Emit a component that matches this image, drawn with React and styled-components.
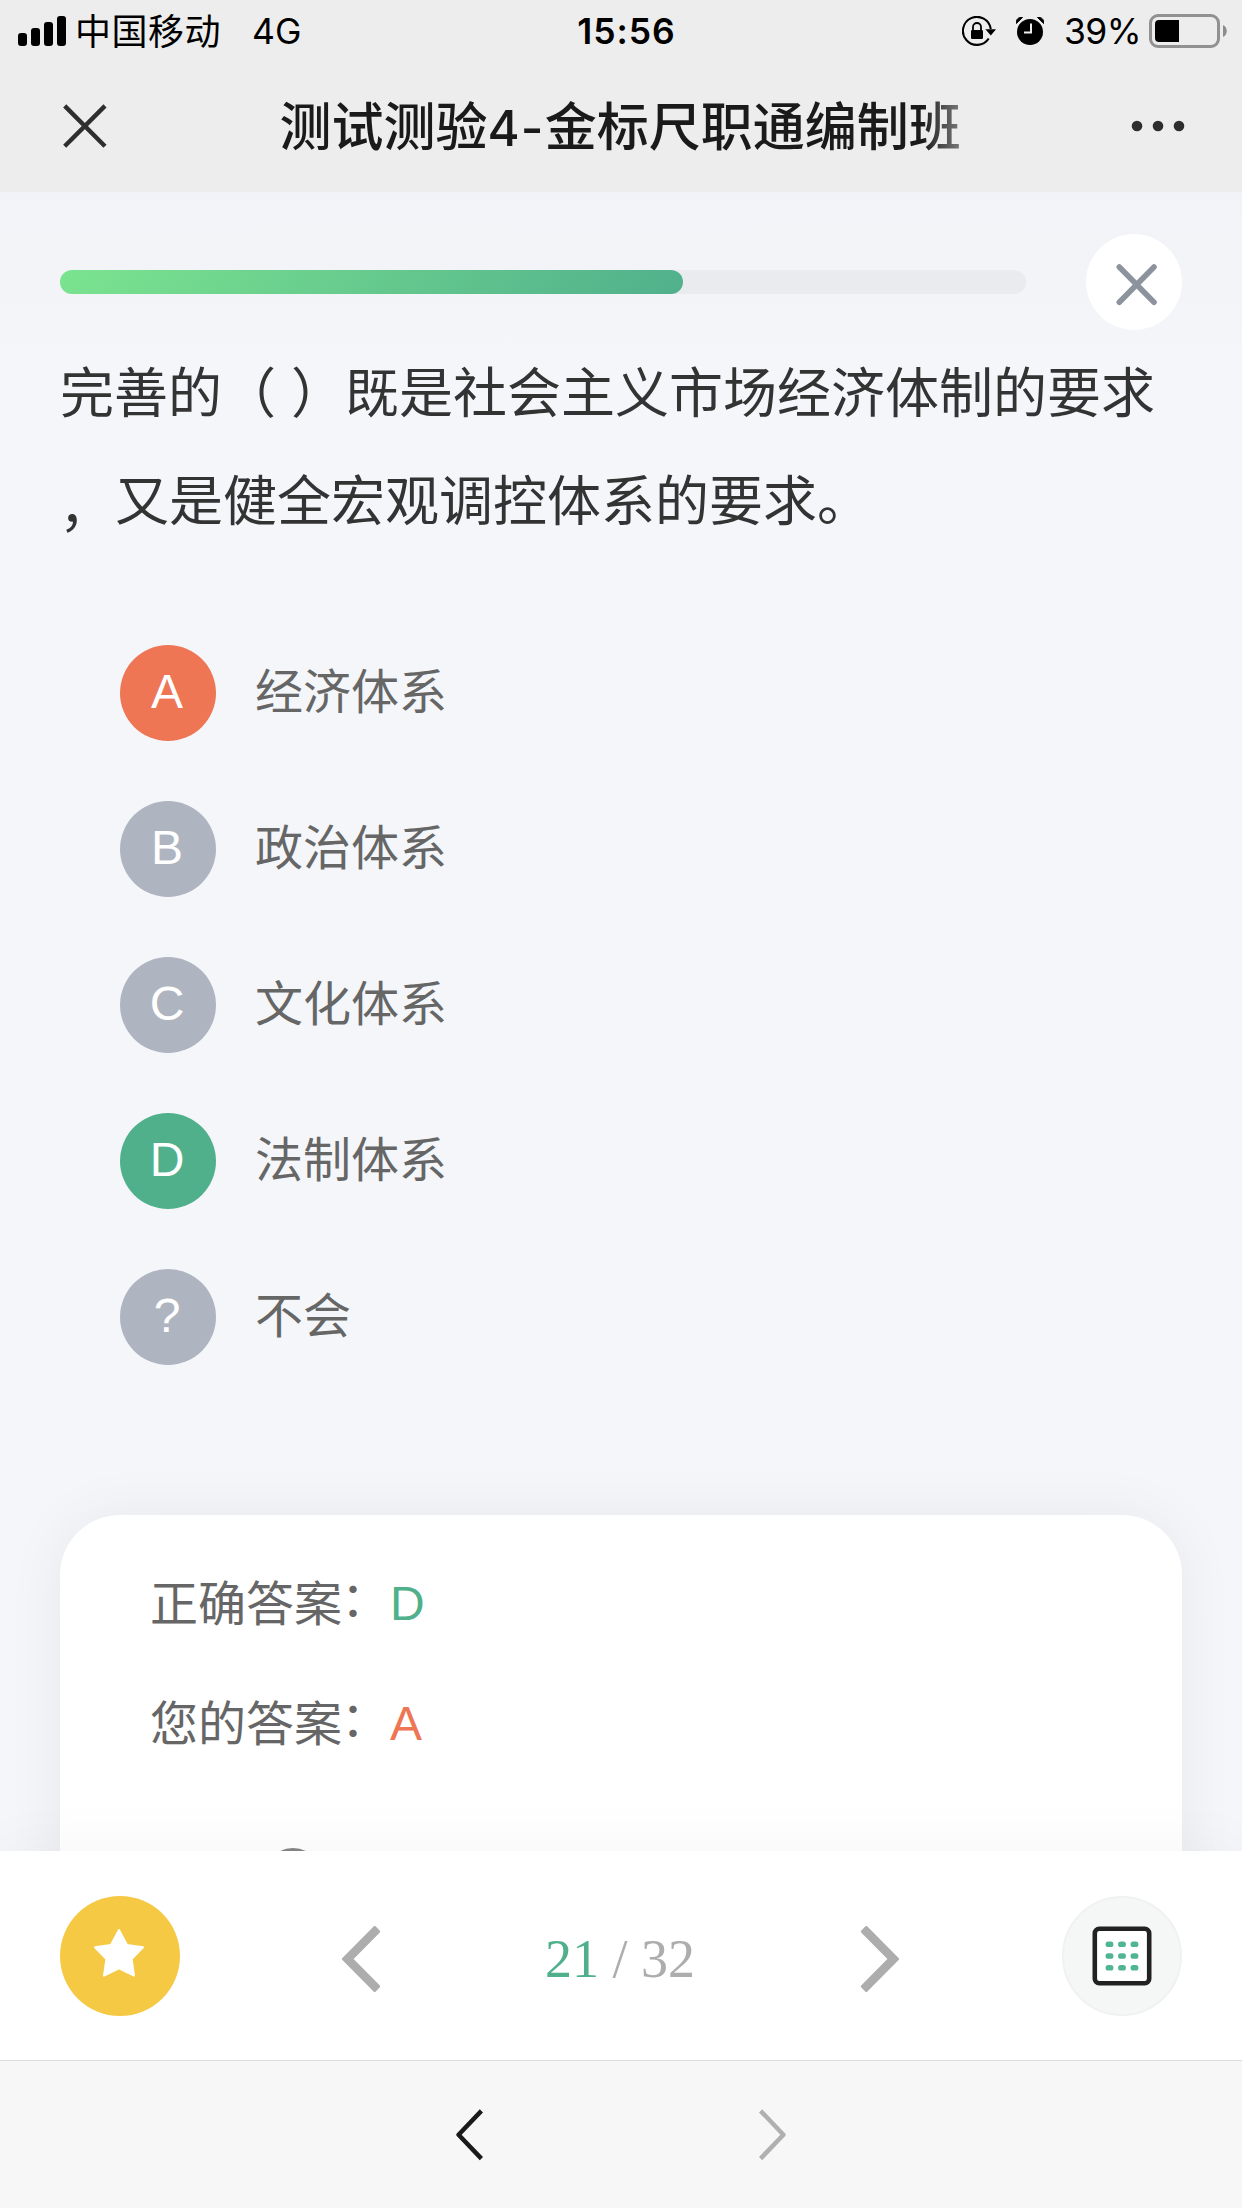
import React from "react";
import styled, { createGlobalStyle } from "styled-components";

const CJK = `"Noto Sans CJK SC", sans-serif`;
const LATIN = `"Liberation Sans", "Noto Sans CJK SC", sans-serif`;

const GlobalStyle = createGlobalStyle`
  * { box-sizing: border-box; }
  body { margin: 0; background: #f4f6fa; }
  p { margin: 0; }
  button { border: 0; padding: 0; background: none; font: inherit; color: inherit; display: block; }
  svg { display: block; flex: none; }
`;

const Screen = styled.div`
  width: 1242px;
  height: 2208px;
  display: flex;
  flex-direction: column;
  overflow: hidden;
  font-family: ${CJK};
`;

const Top = styled.header`
  height: 192px;
  flex: none;
  background: #ededed;
`;

const StatusBar = styled.div`
  height: 60px;
  display: grid;
  grid-template-columns: 1fr auto 1fr;
  align-items: center;
  padding: 0 15px 0 18px;
  color: #000;
`;

const StatusGroup = styled.div`
  display: flex;
  align-items: center;
  justify-content: ${(p) => (p.$end ? "flex-end" : "flex-start")};
`;

const Carrier = styled.span`
  font-size: 36px;
  line-height: 60px;
  height: 60px;
  letter-spacing: 0.5px;
  margin: -5px 0 0 9px;
`;

const StatusText = styled.span`
  font-family: Inter, sans-serif;
  font-size: 35.5px;
  line-height: 60px;
  font-weight: ${(p) => p.$weight || 400};
  letter-spacing: ${(p) => p.$spacing || 0}px;
  margin-left: ${(p) => p.$left || 0}px;
  margin-top: 2px;
`;

const Battery = styled.svg`
  margin-left: 8px;
`;

const TitleBar = styled.div`
  height: 132px;
  display: flex;
  align-items: center;
  justify-content: space-between;
  padding: 0 57px 0 60px;
`;

const Title = styled.h1`
  margin: 0 -8px 5px 0;
  width: 688px;
  height: 84px;
  white-space: nowrap;
  font-size: 52px;
  line-height: 84px;
  font-weight: 500;
  color: #1a1a1a;
  -webkit-mask-image: linear-gradient(to right, #000 642px, rgba(0, 0, 0, 0.55) 680px);
  mask-image: linear-gradient(to right, #000 642px, rgba(0, 0, 0, 0.55) 680px);
`;

const TitleLatin = styled.span`
  font-family: Inter, sans-serif;
  font-size: 49px;
  line-height: 1;
  letter-spacing: 1.2px;
`;

const Content = styled.main`
  flex: 1;
  min-height: 0;
  overflow: hidden;
  padding: 42px 60px 0;
  background: linear-gradient(#f1f3f8 0, #f2f4f8 90px, #f4f6fa 180px);
`;

const ProgressRow = styled.div`
  display: flex;
  align-items: center;
  justify-content: space-between;
  height: 96px;
`;

const Track = styled.div`
  width: 966px;
  height: 24px;
  border-radius: 12px;
  background: #e9ebef;
`;

const Fill = styled.div`
  height: 100%;
  border-radius: 12px;
  background: linear-gradient(135deg, #7be48f, #50b08c);
`;

const RoundButton = styled.button`
  width: ${(p) => p.$size}px;
  height: ${(p) => p.$size}px;
  border-radius: 50%;
  background: ${(p) => p.$bg};
  border: ${(p) => (p.$border ? `2px solid ${p.$border}` : "0")};
  display: flex;
  align-items: center;
  justify-content: center;
`;

const Question = styled.p`
  margin-top: 6px;
  font-size: 54px;
  line-height: 108px;
  color: #333;
  white-space: nowrap;
  word-spacing: 3px;
  text-spacing-trim: space-all;
`;

const Comma = styled.span`
  line-height: 0;
  vertical-align: -6px;
  margin: 0 2px 0 -1px;
`;

const Options = styled.div`
  display: flex;
  flex-direction: column;
  gap: 60px;
  padding: 93px 60px 0;
`;

const Option = styled.div`
  display: flex;
  align-items: center;
  height: 96px;
  gap: 39px;
`;

const badgeColors = { wrong: "#ee7655", right: "#50b08c", idle: "#aeb5c0" };

const Badge = styled.span`
  width: 96px;
  height: 96px;
  border-radius: 50%;
  display: flex;
  align-items: center;
  justify-content: center;
  padding: 0 2px 2px 0;
  font-family: ${LATIN};
  font-size: 48px;
  line-height: 48px;
  color: #fff;
  background: ${(p) => badgeColors[p.$state]};
`;

const OptionText = styled.span`
  font-size: 48px;
  line-height: 72px;
  color: #666;
  margin-bottom: 11px;
`;

const Card = styled.section`
  margin-top: 150px;
  height: 500px;
  padding: 25px 90px 0;
  border-radius: 60px;
  background: #fff;
  box-shadow: 0 0 60px rgba(0, 0, 0, 0.06);
`;

const AnswerRow = styled.p`
  font-size: 48px;
  line-height: 120px;
  height: 120px;
  color: #666;
  text-spacing-trim: space-all;
`;

const Colon = styled.span`
  line-height: 0;
  vertical-align: 5px;
  margin: 0 1px 0 -1px;
`;

const AnswerValue = styled.span`
  font-family: ${LATIN};
  line-height: 0;
  vertical-align: 1.5px;
  color: ${(p) => badgeColors[p.$state]};
`;

const Rating = styled.div`
  margin: 68px 0 0 115px;
  width: 56px;
  height: 56px;
  border: 3px solid #858585;
  border-radius: 50%;
`;

const Toolbar = styled.footer`
  position: relative;
  height: 209px;
  flex: none;
  display: flex;
  justify-content: space-between;
  padding: 45px 60px 0;
  background: #fff;
  box-shadow: 0 0 60px rgba(0, 0, 0, 0.045);
`;

const Pager = styled.div`
  display: flex;
  align-items: center;
  justify-content: space-between;
  width: 560px;
  height: 120px;
  margin-right: 1px;
  padding-top: 6px;
`;

const Count = styled.span`
  font-family: "Liberation Serif", serif;
  font-size: 54px;
  line-height: 60px;
  color: #adadad;
  white-space: pre;
  margin-right: 1px;
`;

const Current = styled.span`
  color: #50b08c;
`;

const BrowserNav = styled.nav`
  height: 148px;
  flex: none;
  position: relative;
  display: flex;
  justify-content: center;
  gap: 276px;
  padding-top: 48px;
  background: #f7f7f7;
  border-top: 1px solid #dedede;
`;

const SignalIcon = () => (
  <svg width="48" height="30" viewBox="0 0 48 30">
    <rect x="0" y="17" width="9" height="13" rx="3" />
    <rect x="13" y="12" width="9" height="18" rx="3" />
    <rect x="26" y="6" width="9" height="24" rx="3" />
    <rect x="39" y="0" width="9" height="30" rx="3" />
  </svg>
);

const RotationLockIcon = () => (
  <svg width="34" height="30" viewBox="0 0 34 30">
    <path d="M26.7 22.5A14 14 0 1 1 28.8 13" fill="none" stroke="#000" strokeWidth="2.1" />
    <path d="M23.4 13.2H34L28.8 19.6Z" />
    <rect x="9" y="14" width="12" height="9" rx="1.2" />
    <path d="M11 14.5V11a4 4 0 0 1 8 0v3.5" fill="none" stroke="#000" strokeWidth="1.8" />
  </svg>
);

const AlarmSvg = styled.svg`
  margin-left: 20px;
`;

const AlarmIcon = () => (
  <AlarmSvg width="28" height="28" viewBox="0 0 28 28">
    <circle cx="14" cy="15" r="13" />
    <path d="M0.3 6.5C-.3 2.5 2.5-.2 6.5.5Z" stroke="#000" strokeWidth="1" strokeLinejoin="round" />
    <path d="M27.7 6.5C28.3 2.5 25.5-.2 21.5.5Z" stroke="#000" strokeWidth="1" strokeLinejoin="round" />
    <path d="M15 6.5V15.6H8" fill="none" stroke="#ededed" strokeWidth="2" />
  </AlarmSvg>
);

const BatteryIcon = () => (
  <Battery width="78" height="34" viewBox="0 0 78 34">
    <rect x="1.5" y="1.5" width="68" height="31" rx="7.5" fill="none" stroke="#919191" strokeWidth="3" />
    <path d="M10 6H30V28H10a4 4 0 0 1-4-4V10a4 4 0 0 1 4-4Z" />
    <path d="M74 11c5 2 5 10 0 12Z" fill="#8c8c8c" />
  </Battery>
);

const CloseIcon = () => (
  <svg width="48" height="48" viewBox="0 0 48 48">
    <path d="M4.7 3.9 45 44.2M45 3.9 4.7 44.2" stroke="#2e2e2e" strokeWidth="4.4" />
  </svg>
);

const MoreIcon = () => (
  <svg width="54" height="12" viewBox="0 0 54 12" fill="#2e2e2e">
    <circle cx="6" cy="6" r="5.3" />
    <circle cx="27" cy="6" r="5.3" />
    <circle cx="48" cy="6" r="5.3" />
  </svg>
);

const DismissIcon = () => (
  <svg width="96" height="96" viewBox="0 0 96 96">
    <path d="M33.3 33 68 68.2M68 33 33.3 68.2" stroke="#8d939d" strokeWidth="5.6" strokeLinecap="round" />
  </svg>
);

const StarIcon = () => (
  <svg width="120" height="120" viewBox="0 0 120 120">
    <path
      d="M59 34 67 48.9 83 51.2 71.6 63 74 79.6 59 72.3 44 79.6 46.4 63 35 51.2 51 48.9Z"
      fill="#fff"
      stroke="#fff"
      strokeWidth="2"
      strokeLinejoin="round"
    />
  </svg>
);

const PagerArrow = ({ flip }) => (
  <svg width="40" height="68" viewBox="0 0 40 68">
    <path
      d="M2 34 33.7 2.2 38 6.7 11 34 38 61.3 33.7 65.8Z"
      transform={flip ? "translate(40 0) scale(-1 1)" : undefined}
      fill="#adadad"
      stroke="#adadad"
      strokeWidth="2.4"
      strokeLinejoin="round"
    />
  </svg>
);

const SheetIcon = () => (
  <svg width="60" height="60" viewBox="0 0 60 60">
    <rect x="2.8" y="2.8" width="54.4" height="54.4" rx="4.5" fill="#fff" stroke="#222" strokeWidth="4.6" />
    {[18.2, 30, 41.8].map((y) =>
      [17.5, 30, 42.5].map((x) => (
        <rect key={`${x}-${y}`} x={x - 3.9} y={y - 2.8} width="7.8" height="5.6" rx="2.6" fill="#50b593" />
      ))
    )}
  </svg>
);

const Chevron = ({ flip, color }) => (
  <svg width="27" height="52" viewBox="0 0 27 52">
    <path
      d="M25.4 1.9 2.6 25.7 25.4 49.6"
      transform={flip ? "translate(27 0) scale(-1 1)" : undefined}
      fill="none"
      stroke={color}
      strokeWidth="4.5"
      strokeLinejoin="round"
    />
  </svg>
);

const options = [
  { key: "A", text: "经济体系", state: "wrong" },
  { key: "B", text: "政治体系", state: "idle" },
  { key: "C", text: "文化体系", state: "idle" },
  { key: "D", text: "法制体系", state: "right" },
  { key: "?", text: "不会", state: "idle" },
];

export default function App() {
  const current = 21;
  const total = 32;
  const progress = ((current - 1) / (total - 1)) * 100;

  return (
    <Screen>
      <GlobalStyle />
      <Top>
        <StatusBar>
          <StatusGroup>
            <SignalIcon />
            <Carrier>中国移动</Carrier>
            <StatusText $left={31}>4G</StatusText>
          </StatusGroup>
          <StatusText $weight={600} $spacing={1} $left={8}>15:56</StatusText>
          <StatusGroup $end>
            <RotationLockIcon />
            <AlarmIcon />
            <StatusText $left={20} $spacing={-0.6}>39%</StatusText>
            <BatteryIcon />
          </StatusGroup>
        </StatusBar>
        <TitleBar>
          <CloseIcon />
          <Title>
            测试测验<TitleLatin>4-</TitleLatin>金标尺职通编制班
          </Title>
          <MoreIcon />
        </TitleBar>
      </Top>

      <Content>
        <ProgressRow>
          <Track>
            <Fill style={{ width: `${progress}%` }} />
          </Track>
          <RoundButton $size={96} $bg="#fff" aria-label="关闭">
            <DismissIcon />
          </RoundButton>
        </ProgressRow>

        <Question>
          完善的（ ）既是社会主义市场经济体制的要求
          <br />
          <Comma>，</Comma>又是健全宏观调控体系的要求。
        </Question>

        <Options>
          {options.map((o) => (
            <Option key={o.key}>
              <Badge $state={o.state}>{o.key}</Badge>
              <OptionText>{o.text}</OptionText>
            </Option>
          ))}
        </Options>

        <Card>
          <AnswerRow>
            正确答案<Colon>：</Colon>
            <AnswerValue $state="right">D</AnswerValue>
          </AnswerRow>
          <AnswerRow>
            您的答案<Colon>：</Colon>
            <AnswerValue $state="wrong">A</AnswerValue>
          </AnswerRow>
          <Rating />
        </Card>
      </Content>

      <Toolbar>
        <RoundButton $size={120} $bg="#f6c945" aria-label="收藏">
          <StarIcon />
        </RoundButton>
        <Pager>
          <PagerArrow />
          <Count>
            <Current>{current}</Current> / {total}
          </Count>
          <PagerArrow flip />
        </Pager>
        <RoundButton $size={120} $bg="#f5f7f7" $border="#f0f1f1" aria-label="答题卡">
          <SheetIcon />
        </RoundButton>
      </Toolbar>

      <BrowserNav>
        <Chevron color="#1a1a1a" />
        <Chevron color="#b0b0b0" flip />
      </BrowserNav>
    </Screen>
  );
}
